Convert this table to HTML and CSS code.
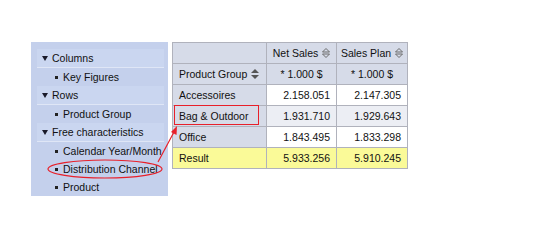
FILE: index.html
```html
<!DOCTYPE html>
<html>
<head>
<meta charset="utf-8">
<link rel="stylesheet" href="styles.css">
</head>
<body>
<div class="wrap">
  <div class="panel">
    <div class="head"><span class="tri"></span>Columns</div>
    <div class="item"><span class="dot"></span>Key Figures</div>
    <div class="head"><span class="tri"></span>Rows</div>
    <div class="item"><span class="dot"></span>Product Group</div>
    <div class="head"><span class="tri"></span>Free characteristics</div>
    <div class="item"><span class="dot"></span>Calendar Year/Month</div>
    <div class="item"><span class="dot"></span>Distribution Channel</div>
    <div class="item"><span class="dot"></span>Product</div>
  </div>
  <table class="grid">
    <colgroup><col class="c1"><col class="c2"><col class="c3"></colgroup>
    <tr>
      <th class="hd"></th>
      <th class="hd">Net Sales <svg class="sort" width="8" height="10" viewBox="0 0 8 10"><path d="M4 0.5 L7.5 4 H0.5 Z M4 9.5 L7.5 6 H0.5 Z" fill="none" stroke="#6a6a6a" stroke-width="1"/></svg></th>
      <th class="hd">Sales Plan <svg class="sort" width="8" height="10" viewBox="0 0 8 10"><path d="M4 0.5 L7.5 4 H0.5 Z M4 9.5 L7.5 6 H0.5 Z" fill="none" stroke="#6a6a6a" stroke-width="1"/></svg></th>
    </tr>
    <tr>
      <th class="hd lbl">Product Group <svg class="sort" width="8" height="10" viewBox="0 0 8 10"><path d="M4 0 L8 4 H0 Z M4 10 L8 6 H0 Z" fill="#555"/></svg></th>
      <th class="hd">* 1.000 $</th>
      <th class="hd">* 1.000 $</th>
    </tr>
    <tr>
      <td class="hd lbl">Accessoires</td>
      <td class="num">2.158.051</td>
      <td class="num">2.147.305</td>
    </tr>
    <tr class="sel">
      <td class="hd lbl">Bag &amp; Outdoor</td>
      <td class="num">1.931.710</td>
      <td class="num">1.929.643</td>
    </tr>
    <tr>
      <td class="hd lbl">Office</td>
      <td class="num">1.843.495</td>
      <td class="num">1.833.298</td>
    </tr>
    <tr class="res">
      <td class="lbl">Result</td>
      <td class="num">5.933.256</td>
      <td class="num">5.910.245</td>
    </tr>
  </table>
</div>
<svg class="marks" width="534" height="241" viewBox="0 0 534 241">
  <rect x="174.5" y="105.5" width="84" height="19" fill="none" stroke="#e8202a" stroke-width="1"/>
  <ellipse cx="105" cy="169" rx="57" ry="9" fill="none" stroke="#e8202a" stroke-width="1.2"/>
  <line x1="158" y1="162" x2="174" y2="132" stroke="#e8202a" stroke-width="1.2"/>
  <path d="M177 126 L176.5 135 L171 132 Z" fill="#e8202a"/>
</svg>
</body>
</html>
```
FILE: styles.css
```css
html, body {
  margin: 0;
  padding: 0;
  background: #ffffff;
}
body {
  font-family: "Liberation Sans", Arial, sans-serif;
  font-size: 10.5px;
  color: #111;
  width: 534px;
  height: 241px;
  position: relative;
  overflow: hidden;
}
.wrap {
  display: flex;
  align-items: flex-start;
  gap: 4px;
  padding: 42px 0 0 31px;
}
.panel {
  width: 137px;
  height: 154px;
  box-sizing: border-box;
  padding-top: 7px;
  background: #c4d0ec;
}
.head {
  height: 19px;
  box-sizing: border-box;
  margin-left: 6px;
  margin-right: 4px;
  padding-left: 5px;
  display: flex;
  align-items: center;
  background: #cad6f0;
  border-bottom: 1px solid #dfe6f6;
}
.tri {
  width: 0;
  height: 0;
  border-left: 3.5px solid transparent;
  border-right: 3.5px solid transparent;
  border-top: 5px solid #1a1a2a;
  margin-right: 4px;
}
.item {
  height: 18px;
  display: flex;
  align-items: center;
  padding-left: 24px;
}
.dot {
  width: 3px;
  height: 3px;
  background: #222;
  margin-right: 5px;
}
.grid {
  border-collapse: collapse;
  border: 1px solid #9aa0b0;
  width: 235px;
  table-layout: fixed;
}
.c1 { width: 94px; }
.c2 { width: 70px; }
.c3 { width: 71px; }
.grid th, .grid td {
  height: 21px;
  padding: 0 6px;
  border: 1px solid #b0b2bc;
  font-weight: normal;
  white-space: nowrap;
  box-sizing: border-box;
}
.grid th {
  padding: 0 3px;
}
.grid th.lbl {
  padding-left: 6px;
}
.hd {
  background: #d6dbe8;
  text-align: center;
}
.lbl {
  text-align: left;
}
.num {
  background: #ffffff;
  text-align: right;
}
.sel .num {
  background: #eceef4;
}
.res td {
  background: #fafa98;
}
.sort {
  vertical-align: -1px;
  margin-left: 1px;
}
.marks {
  position: absolute;
  top: 0;
  left: 0;
  pointer-events: none;
}
```
